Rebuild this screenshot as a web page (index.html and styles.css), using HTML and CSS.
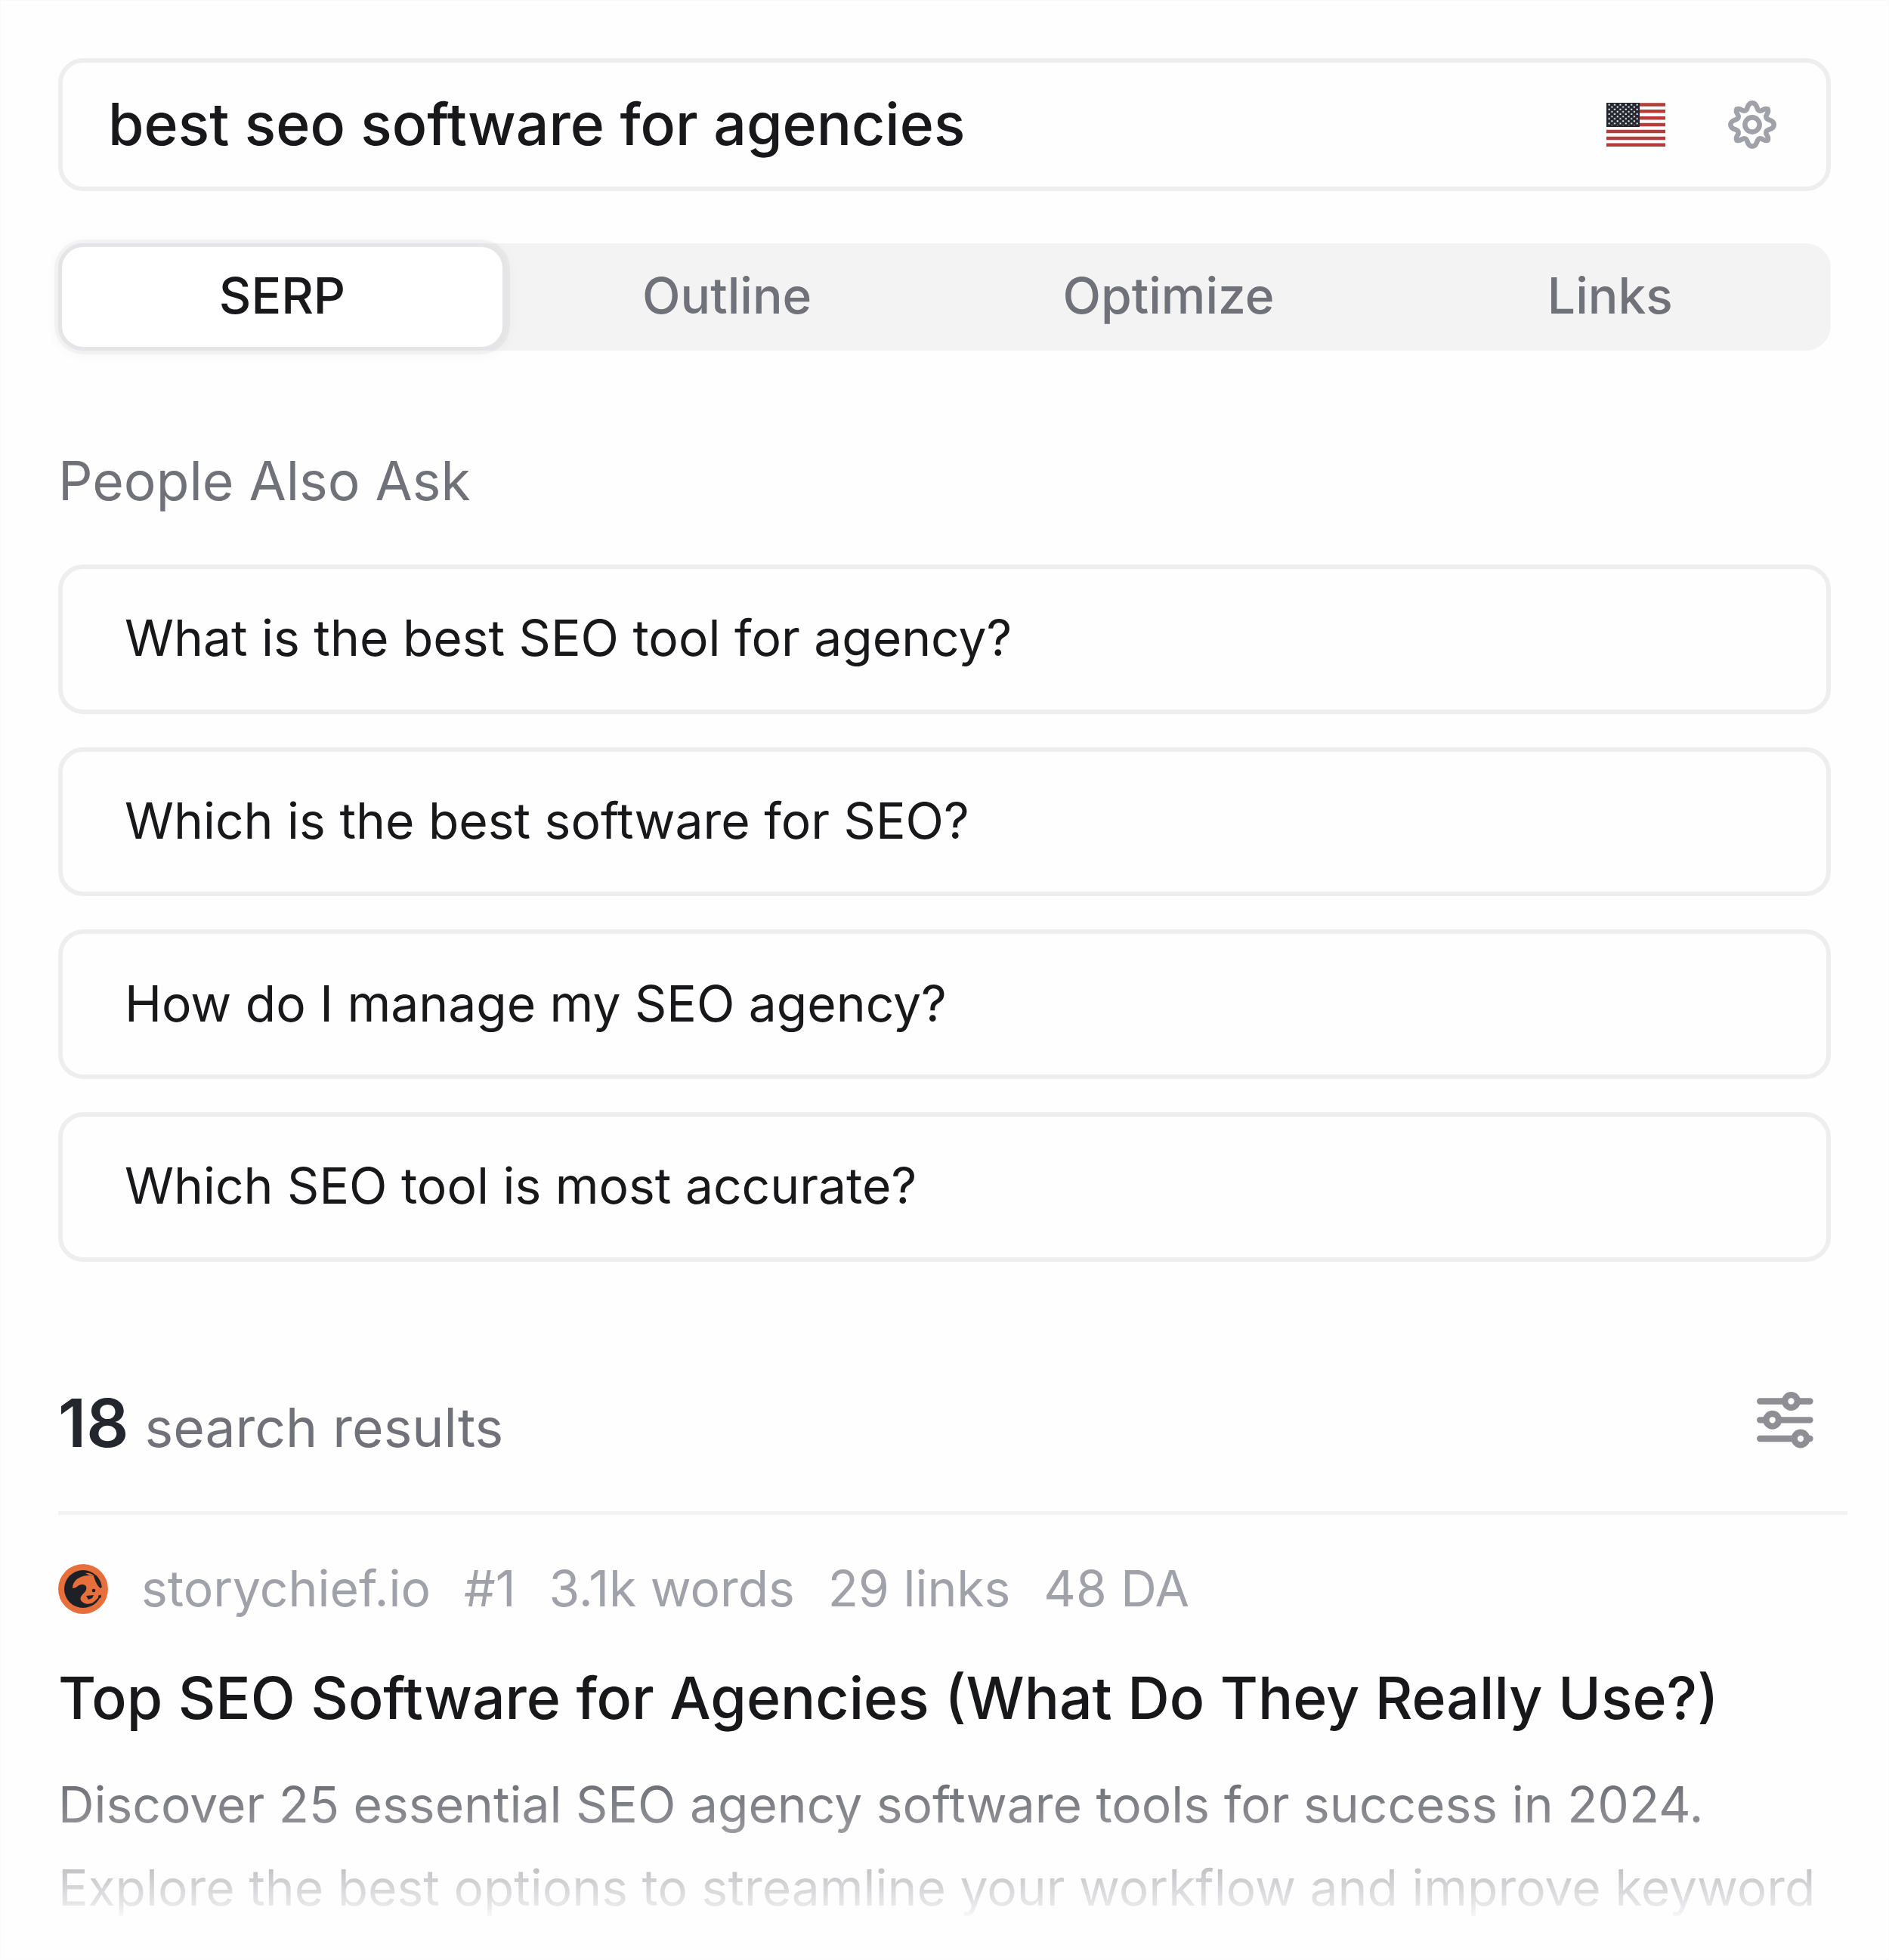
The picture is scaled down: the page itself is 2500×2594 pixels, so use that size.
FILE: index.html
```html
<!DOCTYPE html>
<html lang="en">
<head>
  <meta charset="UTF-8">
  <meta name="viewport" content="width=device-width, initial-scale=1.0">
  <title>SERP Research</title>
  <link rel="stylesheet" href="styles.css">
</head>
<body>
  <main class="panel">
    <div class="search-box">
      <span class="search-query">best seo software for agencies</span>
      <svg class="flag" viewBox="0 0 78 60">
        <defs>
          <pattern id="stars" x="2" y="2" width="7.4" height="6.2" patternUnits="userSpaceOnUse">
            <rect x="0.6" y="0.6" width="2" height="2" fill="#fff"/>
            <rect x="4.3" y="3.7" width="2" height="2" fill="#fff"/>
          </pattern>
        </defs>
        <rect width="78" height="60" fill="#fff"/>
        <path d="M0 3.500h78M0 12.300h78M0 21.200h78M0 30h78M0 39h78M0 48h78M0 56.800h78" stroke="#b43c3a" stroke-width="4.6"/>
        <rect y="1" width="44" height="32" fill="#23262f"/>
        <rect x="2" y="2" width="40.5" height="29" fill="url(#stars)"/>
      </svg>
      <svg class="gear" viewBox="0 0 64 64" fill="none" stroke="#a1a1aa" stroke-width="6.6">
        <path d="M32 3.300C37 3.300 38 8 39 11C40.200 14 43 14.500 46 12.500C49 10.500 51.500 11 52.500 11.500C53 12.500 53.500 15 51.500 18C49.500 21 50 23.800 53 25C56 26 60.700 27 60.700 32C60.700 37 56 38 53 39C50 40.200 49.500 43 51.500 46C53.500 49 53 51.500 52.500 52.500C51.500 53 49 53.500 46 51.500C43 49.500 40.200 50 39 53C38 56 37 60.700 32 60.700C27 60.700 26 56 25 53C23.800 50 21 49.500 18 51.500C15 53.500 12.500 53 11.500 52.500C11 51.500 10.500 49 12.500 46C14.500 43 14 40.200 11 39C8 38 3.300 37 3.300 32C3.300 27 8 26 11 25C14 23.800 14.500 21 12.500 18C10.500 15 11 12.500 11.500 11.500C12.500 11 15 10.500 18 12.500C21 14.500 23.800 14 25 11C26 8 27 3.300 32 3.300Z"/>
        <circle cx="32" cy="32" r="9.6"/>
      </svg>
    </div>

    <nav class="tabs">
      <a class="tab active" href="#serp">SERP</a>
      <a class="tab" href="#outline">Outline</a>
      <a class="tab" href="#optimize">Optimize</a>
      <a class="tab" href="#links">Links</a>
    </nav>

    <h2 class="section-title">People Also Ask</h2>
    <ul class="questions">
      <li>What is the best SEO tool for agency?</li>
      <li>Which is the best software for SEO?</li>
      <li>How do I manage my SEO agency?</li>
      <li>Which SEO tool is most accurate?</li>
    </ul>

    <div class="results-header">
      <p class="results-count"><strong>18</strong><span>search results</span></p>
      <svg class="filter" viewBox="0 0 75 75" fill="none" stroke="#8e8e94" stroke-width="8.3" stroke-linecap="round">
        <path d="M4.200 12.500H37M54 12.500H70.500M4.200 37.300H12M29 37.300H70.500M4.200 62H49M66 62H70.500"/>
        <circle cx="45.500" cy="12.500" r="8.300"/>
        <circle cx="20.700" cy="37.300" r="8.300"/>
        <circle cx="58" cy="62" r="8.300"/>
      </svg>
    </div>

    <article class="result">
      <div class="result-meta">
        <svg class="favicon" viewBox="0 0 66 66">
          <circle cx="33" cy="33" r="33" fill="#e66f3c"/>
          <circle cx="33" cy="33" r="25" fill="#1d2027"/>
          <path d="M19 32C19 26 22 21 28 18C34 15 40 14 47 16C49 22 51 28 56 32L59 30L58 39C54 42 52 47 46 51C41 54 33 53 30 48C28 43 33 40 36 36C39 31 37 27 32 27C26 27 25 32 19 32Z" fill="#e66f3c"/>
          <path d="M36 12C41 11 45 13 48 16L42 15Z" fill="#e66f3c"/>
          <path d="M37 42L47 41L45 45L40 47Z" fill="#1d2027"/>
          <circle cx="47" cy="35" r="2.300" fill="#1d2027"/>
          <circle cx="55" cy="43" r="2" fill="#1d2027"/>
        </svg>
        <span class="domain">storychief.io</span>
        <span>#1</span>
        <span>3.1k words</span>
        <span>29 links</span>
        <span>48 DA</span>
      </div>
      <h3 class="result-title">Top SEO Software for Agencies (What Do They Really Use?)</h3>
      <p class="result-text">Discover 25 essential SEO agency software tools for success in 2024.<br>Explore the best options to streamline your workflow and improve keyword</p>
    </article>
  </main>
</body>
</html>
```
FILE: styles.css
```css
* {
  padding: 0;
  margin: 0;
  box-sizing: border-box;
}

body {
  font-family: Inter, "Liberation Sans", sans-serif;
  font-size: 65.93px;
  background-color: #fefefe;
  color: #18181b;
}

.panel {
  width: 2500px;
  height: 2594px;
  padding: 76px;
  border: 1px solid #fafafa;
  overflow: hidden;
}

.search-box {
  display: flex;
  align-items: center;
  height: 176px;
  padding: 0 66px 0 60px;
  border: 6px solid #eee;
  border-radius: 33px;
}

.search-query {
  flex: 1;
  padding-bottom: 2px;
  font-size: 76.92px;
  font-weight: 500;
}

.flag {
  width: 78px;
  height: 60px;
  margin-right: 83px;
}

.gear {
  width: 64px;
  height: 64px;
}

.tabs {
  display: flex;
  height: 142px;
  margin-top: 69px;
  background-color: #f3f3f4;
  border-radius: 33px;
}

.tab {
  flex: 1;
  display: flex;
  align-items: center;
  justify-content: center;
  padding-bottom: 5px;
  color: #71717a;
  font-weight: 500;
  text-decoration: none;
}

.tab.active {
  flex: 0 0 593px;
  color: #18181b;
  background-color: #fff;
  border: 5px solid #e5e5e7;
  border-radius: 33px;
  box-shadow: 0 0 0 5px rgba(0, 0, 0, 0.03), 0 2px 20px rgba(0, 0, 0, 0.05);
}

.section-title {
  margin-top: 120px;
  font-size: 71.42px;
  font-weight: 400;
  line-height: 104px;
  color: #71717a;
}

.questions {
  display: flex;
  flex-direction: column;
  gap: 44px;
  margin-top: 59px;
  list-style: none;
}

.questions li {
  display: flex;
  align-items: center;
  height: 197.7px;
  padding: 0 0 3px 82px;
  border: 6px solid #eee;
  border-radius: 33px;
}

.results-header {
  display: flex;
  justify-content: space-between;
  height: 335px;
  margin-right: -22px;
  padding: 160px 45px 0 0;
  border-bottom: 5px solid #f3f3f4;
}

.results-count {
  display: flex;
  align-items: baseline;
  gap: 21px;
  line-height: 106px;
  font-size: 71.42px;
  color: #71717a;
}

.results-count strong {
  font-size: 87.9px;
  font-weight: 600;
  color: #24262d;
}

.filter {
  width: 75px;
  height: 75px;
  margin-top: 12px;
}

.result-meta {
  display: flex;
  align-items: center;
  gap: 44px;
  height: 80px;
  margin-top: 58px;
  color: #a1a1aa;
}

.result-meta span {
  padding-bottom: 2px;
}

.favicon {
  width: 66px;
  height: 66px;
}

.result-title {
  margin-top: 49px;
  font-size: 76.92px;
  font-weight: 500;
  line-height: 110px;
  white-space: nowrap;
}

/* Snippet fades out towards the bottom of the panel */
.result-text {
  margin-top: 31px;
  line-height: 110px;
  white-space: nowrap;
  color: transparent;
  background: linear-gradient(#6a6a73 20px, #8f8f95 78px, #bbbbbe 130px, #e8e8ea 188px, #fefefe 210px);
  background-clip: text;
  -webkit-background-clip: text;
}
```
